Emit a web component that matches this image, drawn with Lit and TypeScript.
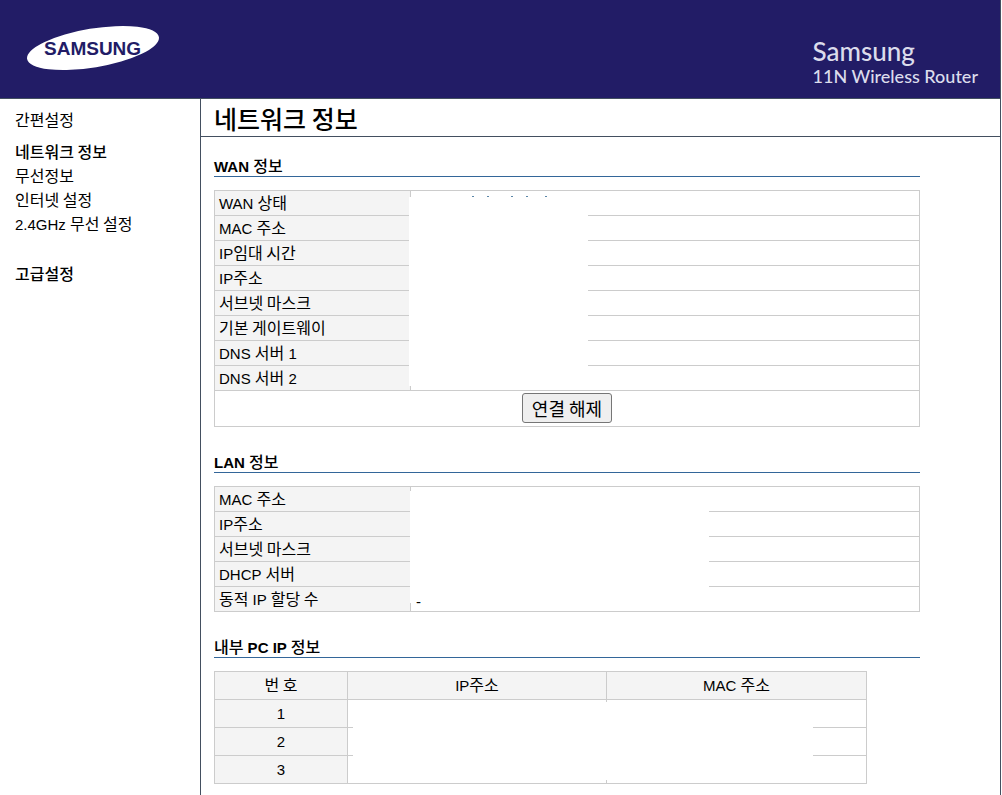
import { LitElement, html, svg, css } from "lit";
import { customElement } from "lit/decorators.js";

/* Hangul runs are set one step larger than the Latin text around them. */
const mixed = (text: string) =>
  text
    .split(/([\uac00-\ud7a3]+(?:\s+[\uac00-\ud7a3]+)*)/)
    .filter((part) => part !== "")
    .map((part) => (/[\uac00-\ud7a3]/.test(part) ? html`<span class="ko">${part}</span>` : part));

const WAN_ROWS = ["WAN 상태", "MAC 주소", "IP임대 시간", "IP주소", "서브넷 마스크", "기본 게이트웨이", "DNS 서버 1", "DNS 서버 2"];
const LAN_ROWS = [
  { label: "MAC 주소", value: "" },
  { label: "IP주소", value: "" },
  { label: "서브넷 마스크", value: "" },
  { label: "DHCP 서버", value: "" },
  { label: "동적 IP 할당 수", value: "-" },
];
const SPECKS = [0, 15, 39, 54, 73];

@customElement("app-root")
export class AppRoot extends LitElement {
  static styles = css`
    :host {
      display: block;
      font-family: "Liberation Sans", "Noto Sans CJK KR", sans-serif;
      font-size: 15px;
      line-height: 24px;
      color: #000;
      background: #fff;
    }
    * { box-sizing: border-box; }
    .page {
      display: flex;
      flex-direction: column;
      min-height: 100vh;
      margin-right: 1px;
      border-right: 1px solid #434f60;
    }
    .ko { font-family: "Noto Sans CJK KR", sans-serif; font-size: 16px; font-weight: 400; line-height: 16px; }
    .banner {
      display: flex;
      justify-content: space-between;
      align-items: flex-start;
      height: 99px;
      padding: 24px 22px 0 24px;
      background: #221c66;
      border-bottom: 1px solid #434f60;
    }
    .logo { display: block; width: 138px; height: 48px; }
    .logo-text { font: bold 19px "Liberation Sans", sans-serif; fill: #221c66; }
    .product { padding-top: 12px; color: #dcdcec; font-family: Lato, sans-serif; font-weight: 500; }
    .brand { font-size: 26px; line-height: 30px; }
    .model { font-size: 18px; line-height: 20px; }
    .body { display: flex; flex: 1; }
    .side { width: 201px; flex: none; padding: 10px 0 0 15px; border-right: 1px solid #434f60; }
    .side a { display: block; height: 24px; color: #000; text-decoration: none; white-space: nowrap; }
    .group { margin-bottom: 8px; }
    .group + .group { margin-bottom: 26px; }
    .strong .ko { font-weight: 500; }
    .main { flex: 1; min-width: 0; }
    h1 {
      margin: 0;
      height: 38px;
      padding-left: 13px;
      border-bottom: 1px solid #434f60;
      font: 500 25px/38px "Noto Sans CJK KR", sans-serif;
    }
    .sections { display: flex; flex-direction: column; gap: 22px; padding: 16px 80px 11px 13px; }
    h2 {
      margin: 0 0 13px;
      height: 24px;
      padding-top: 2px;
      border-bottom: 1px solid #336699;
      font-size: 15px;
      line-height: 24px;
      font-weight: bold;
    }
    h2 .ko { font-weight: 500; }
    .holder { position: relative; }
    table { width: 100%; border-collapse: collapse; table-layout: fixed; }
    th, td { height: 25px; padding: 2px 4px 0; border: 1px solid #ccc; font-weight: normal; text-align: left; line-height: 22px; }
    th { background: #f4f4f4; }
    .label-col { width: 196px; }
    .value { padding: 6px 5px 0; line-height: 18px; }
    .value span { position: relative; z-index: 1; }
    .action { height: 36px; padding: 0 4px 1px; text-align: center; }
    button {
      display: block;
      margin: 0 auto;
      height: 30px;
      padding: 0 9px;
      border: 1px solid #767676;
      border-radius: 3px;
      background: #efefef;
      color: #000;
      font: 400 18px/26px "Noto Sans CJK KR", sans-serif;
    }
    .clients { width: 653px; max-width: 100%; }
    .clients th, .clients td { height: 28px; padding: 0 4px; line-height: 24px; text-align: center; }
    .no-col { width: 133px; }
    .ip-col { width: 259px; }
    .cover { position: absolute; background: #fff; }
    .cover-wan { left: 195px; top: 7px; width: 179px; bottom: 41px; }
    .cover-lan { left: 196px; top: 5px; width: 299px; bottom: 9px; }
    .cover-clients { left: 139px; top: 31px; right: 54px; bottom: 4px; }
    .specks { position: absolute; left: 258px; top: 6px; width: 80px; height: 1px; }
  `;

  private section(title: string, content: unknown) {
    return html`<section><h2>${mixed(title)}</h2>${content}</section>`;
  }

  render() {
    return html`
      <div class="page">
        <header class="banner">
          <svg class="logo" viewBox="24 24 138 48" role="img" aria-label="Samsung">
            <ellipse cx="93" cy="48" rx="66.8" ry="19.4" transform="rotate(-9.4 93 48)" fill="#fff" />
            <text class="logo-text" x="44" y="55">SAMSUNG</text>
          </svg>
          <div class="product">
            <div class="brand">Samsung</div>
            <div class="model">11N Wireless Router</div>
          </div>
        </header>
        <div class="body">
          <nav class="side">
            <div class="group"><a href="#">${mixed("간편설정")}</a></div>
            <div class="group">
              <a class="strong" href="#">${mixed("네트워크 정보")}</a>
              <a href="#">${mixed("무선정보")}</a>
              <a href="#">${mixed("인터넷 설정")}</a>
              <a href="#">${mixed("2.4GHz 무선 설정")}</a>
            </div>
            <a class="strong" href="#">${mixed("고급설정")}</a>
          </nav>
          <main class="main">
            <h1>네트워크 정보</h1>
            <div class="sections">
              ${this.section(
                "WAN 정보",
                html`<div class="holder">
                  <table>
                    <colgroup><col class="label-col" /><col /></colgroup>
                    <tbody>
                      ${WAN_ROWS.map((label) => html`<tr><th scope="row">${mixed(label)}</th><td></td></tr>`)}
                      <tr><td class="action" colspan="2"><button type="button">연결 해제</button></td></tr>
                    </tbody>
                  </table>
                  <div class="cover cover-wan"></div>
                  <svg class="specks" viewBox="0 0 80 1" aria-hidden="true">
                    ${SPECKS.map((x) => svg`<rect x=${x} y="0" width="2" height="1" fill="#5a86a8" />`)}
                  </svg>
                </div>`
              )}
              ${this.section(
                "LAN 정보",
                html`<div class="holder">
                  <table>
                    <colgroup><col class="label-col" /><col /></colgroup>
                    <tbody>
                      ${LAN_ROWS.map(
                        (row) => html`<tr><th scope="row">${mixed(row.label)}</th><td class="value"><span>${row.value}</span></td></tr>`
                      )}
                    </tbody>
                  </table>
                  <div class="cover cover-lan"></div>
                </div>`
              )}
              ${this.section(
                "내부 PC IP 정보",
                html`<div class="holder clients">
                  <table>
                    <colgroup><col class="no-col" /><col class="ip-col" /><col /></colgroup>
                    <thead>
                      <tr>${["번 호", "IP주소", "MAC 주소"].map((name) => html`<th scope="col">${mixed(name)}</th>`)}</tr>
                    </thead>
                    <tbody>
                      ${[1, 2, 3].map((no) => html`<tr><th scope="row">${no}</th><td></td><td></td></tr>`)}
                    </tbody>
                  </table>
                  <div class="cover cover-clients"></div>
                </div>`
              )}
            </div>
          </main>
        </div>
      </div>
    `;
  }
}
